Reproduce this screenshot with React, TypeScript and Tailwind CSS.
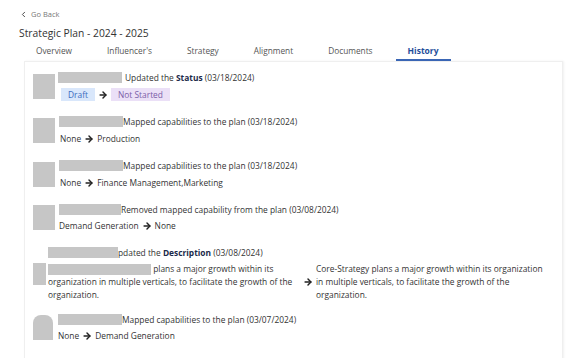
import React from "react"
import { ArrowRight, ChevronLeft } from "lucide-react"

const tabs = ["Overview", "Influencer's", "Strategy", "Alignment", "Documents", "History"]

function Redacted({ w }: { w: string }) {
    return <span className={`inline-block h-[11px] bg-[#c6c6c6] align-middle ${w}`} />
}

function Arrow() {
    return <ArrowRight size={10} strokeWidth={3.5} className="inline-block shrink-0 text-[#222] mx-[3px]" />
}

function Avatar({ w = "w-[22px]", h = "h-[25px]", round = false }: { w?: string; h?: string; round?: boolean }) {
    return <div className={`bg-[#c6c6c6] shrink-0 ${w} ${h} ${round ? "rounded-t-[8px]" : ""}`} />
}

export default function App() {
    return (
        <div className="w-[571px] h-[358px] bg-white overflow-hidden text-[#333] font-['Open_Sans',sans-serif]">
            <div className="flex items-center pl-[19px] pt-[9px] h-[19px] text-[7.5px] leading-[10px] text-[#777]">
                <ChevronLeft size={9} strokeWidth={2.5} className="text-[#444]" />
                <span className="ml-[3px]">Go Back</span>
            </div>
            <div className="pl-[19px] mt-[7px] text-[10.3px] leading-[14px] text-[#333]">Strategic Plan - 2024 - 2025</div>

            {/* TABS */}
            <div className="flex gap-[11px] pl-[24px] mt-[5px] h-[16px]">
                {tabs.map((t) => (
                    <div
                        key={t}
                        className={`px-[12px] leading-[12px] ${t == "History" ? "text-[8.5px] font-bold text-[#1f4e9b] border-b-2 border-[#3a66b5]" : "text-[8.3px] text-[#555]"}`}
                    >
                        {t}
                    </div>
                ))}
            </div>

            {/* HISTORY CARD */}
            <div className="ml-[24px] w-[539px] h-[320px] border border-[#efefef] shadow-[1px_0_2px_rgba(0,0,0,0.06)] pl-[8px] pt-[9px] text-[8.4px] leading-[13px]">
                <div className="flex items-center">
                    <Avatar />
                    <div className="ml-[3px]">
                        <div className="flex items-center">
                            <Redacted w="w-[64px]" />
                            <span className="ml-[3px]">Updated the <b className="text-[#1b2a4a]">Status</b> (03/18/2024)</span>
                        </div>
                        <div className="flex items-center mt-[4px] ml-[3px]">
                            <span className="bg-[#d9e7fb] text-[#3b6cc0] px-[7px]">Draft</span>
                            <Arrow />
                            <span className="bg-[#ebe0f7] text-[#7b5ea8] px-[7px]">Not Started</span>
                        </div>
                    </div>
                </div>

                <div className="flex items-center mt-[14px]">
                    <Avatar />
                    <div className="ml-[4px]">
                        <div className="flex items-center">
                            <Redacted w="w-[64px]" />
                            <span>Mapped capabilities to the plan (03/18/2024)</span>
                        </div>
                        <div className="flex items-center mt-[4px] ml-[1px]">
                            None <Arrow /> Production
                        </div>
                    </div>
                </div>

                <div className="flex items-center mt-[14px]">
                    <Avatar />
                    <div className="ml-[4px]">
                        <div className="flex items-center">
                            <Redacted w="w-[64px]" />
                            <span>Mapped capabilities to the plan (03/18/2024)</span>
                        </div>
                        <div className="flex items-center mt-[4px] ml-[1px]">
                            None <Arrow /> Finance Management,Marketing
                        </div>
                    </div>
                </div>

                <div className="flex items-center mt-[14px]">
                    <Avatar />
                    <div className="ml-[4px]">
                        <div className="flex items-center">
                            <Redacted w="w-[62px]" />
                            <span>Removed mapped capability from the plan (03/08/2024)</span>
                        </div>
                        <div className="flex items-center mt-[3px]">
                            Demand Generation <Arrow /> None
                        </div>
                    </div>
                </div>

                <div className="flex items-center mt-[14px]">
                    <Avatar w="w-[13px]" h="h-[22px]" />
                    <div className="ml-[2px]">
                        <div className="flex items-center">
                            <Redacted w="w-[70px]" />
                            <span>pdated the <b className="text-[#1b2a4a]">Description</b> (03/08/2024)</span>
                        </div>
                        <div className="flex items-center mt-[3px]">
                            <p className="w-[252px]">
                                <Redacted w="w-[103px]" /> plans a major growth within its organization in multiple verticals, to facilitate the growth of the organization.
                            </p>
                            <Arrow />
                            <p className="w-[232px]">
                                Core-Strategy plans a major growth within its organization in multiple verticals, to facilitate the growth of the organization.
                            </p>
                        </div>
                    </div>
                </div>

                <div className="flex items-center mt-[12px]">
                    <Avatar w="w-[20px]" round />
                    <div className="ml-[5px]">
                        <div className="flex items-center">
                            <Redacted w="w-[64px]" />
                            <span>Mapped capabilities to the plan (03/07/2024)</span>
                        </div>
                        <div className="flex items-center mt-[3px]">
                            None <Arrow /> Demand Generation
                        </div>
                    </div>
                </div>
            </div>
        </div>
    )
}
